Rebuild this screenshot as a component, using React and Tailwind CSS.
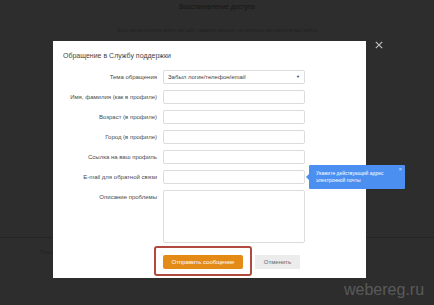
import React from "react";

const rows = [
  "Имя, фамилия (как в профиле)",
  "Возраст (в профиле)",
  "Город (в профиле)",
  "Ссылка на ваш профиль",
];

function Label({ children }) {
  return (
    <div className="w-[110px] shrink-0 pr-[6px] text-right text-[6px] leading-[14px] text-[#4a4a4a] whitespace-nowrap">
      {children}
    </div>
  );
}

function Input() {
  return <div className="w-[142px] h-[14px] border border-[#dcdcdc] rounded-[2px] bg-white" />;
}

export default function App() {
  return (
    <div
      className="relative w-[434px] h-[305px] overflow-hidden bg-[#2d2d2d]"
      style={{ fontFamily: '"Liberation Sans", Arial, sans-serif' }}
    >
      {/* dimmed page behind */}
      <div className="flex flex-col items-center pt-[2px]">
        <div className="text-[6.5px] leading-[9px] text-[#161616]">Восстановление доступа</div>
        <div className="mt-[15px] text-[5px] leading-[8px] text-[#222]">
          Если вы не можете войти на сайт, укажите данные, по которым мы сможем вас найти
        </div>
      </div>
      <div className="absolute left-0 right-0 top-[237px] h-px bg-[#252525]" />
      <div className="absolute left-[40px] top-[249px] text-[5px] text-[#222]">Помощь</div>
      <div className="absolute left-[344px] top-[281px] text-[16px] leading-[18px] text-[#5a5a5a]">
        webereg.ru
      </div>

      {/* close */}
      <svg className="absolute left-[375px] top-[41px]" width="8" height="8" viewBox="0 0 8 8">
        <path d="M0.8 0.8L7.2 7.2M7.2 0.8L0.8 7.2" stroke="#bdbdbd" strokeWidth="1.2" />
      </svg>

      {/* modal */}
      <div className="absolute left-[53px] top-[41px] w-[313px] h-[237px] bg-white flex flex-col">
        <div className="pl-[10px] pt-[10px] text-[7px] leading-[9px] text-[#444]">
          Обращение в Службу поддержки
        </div>
        <div className="mt-[10px] flex flex-col gap-[6px]">
          <div className="flex items-center">
            <Label>Тема обращения</Label>
            <div className="w-[142px] h-[14px] border border-[#dcdcdc] rounded-[2px] flex items-center justify-between pl-[4px] pr-[4px]">
              <span className="text-[6px] text-[#444]">Забыл логин/телефон/email</span>
              <span className="text-[4px] text-[#333]">▼</span>
            </div>
          </div>
          {rows.map((r) => (
            <div key={r} className="flex items-center">
              <Label>{r}</Label>
              <Input />
            </div>
          ))}
          <div className="flex items-center">
            <Label>E-mail для обратной связи</Label>
            <Input />
          </div>
          <div className="flex items-start">
            <Label>Описание проблемы</Label>
            <div className="w-[142px] h-[53px] border border-[#dcdcdc] rounded-[2px]" />
          </div>
        </div>
        <div className="mt-[3px] flex items-start pl-[101px]">
          <div className="border-2 border-[#b04a3e] rounded-[3px] pt-[7px] pb-[5px] pl-[7px] pr-[7px]">
            <div className="w-[80px] h-[14px] bg-[#e38b16] rounded-[2px] flex items-center justify-center text-[6px] text-white">
              Отправить сообщение
            </div>
          </div>
          <div className="ml-[3px] mt-[9px] w-[45px] h-[14px] bg-[#ececec] flex items-center justify-center text-[6px] text-[#666]">
            Отменить
          </div>
        </div>

        {/* tooltip */}
        <div className="absolute left-[256px] top-[124px] w-[96px] h-[24px] bg-[#4b8ff0] rounded-[1px] pl-[7px] pr-[12px] flex items-center">
          <div className="absolute -left-[3px] top-[9px] w-0 h-0 border-y-[3px] border-y-transparent border-r-[3px] border-r-[#4b8ff0]" />
          <div className="text-[5px] leading-[7.5px] text-white">
            Укажите действующий адрес электронной почты
          </div>
          <div className="absolute right-[3px] top-[1px] text-[6px] leading-[6px] text-[#d6e6ff]">×</div>
        </div>
      </div>
    </div>
  );
}
